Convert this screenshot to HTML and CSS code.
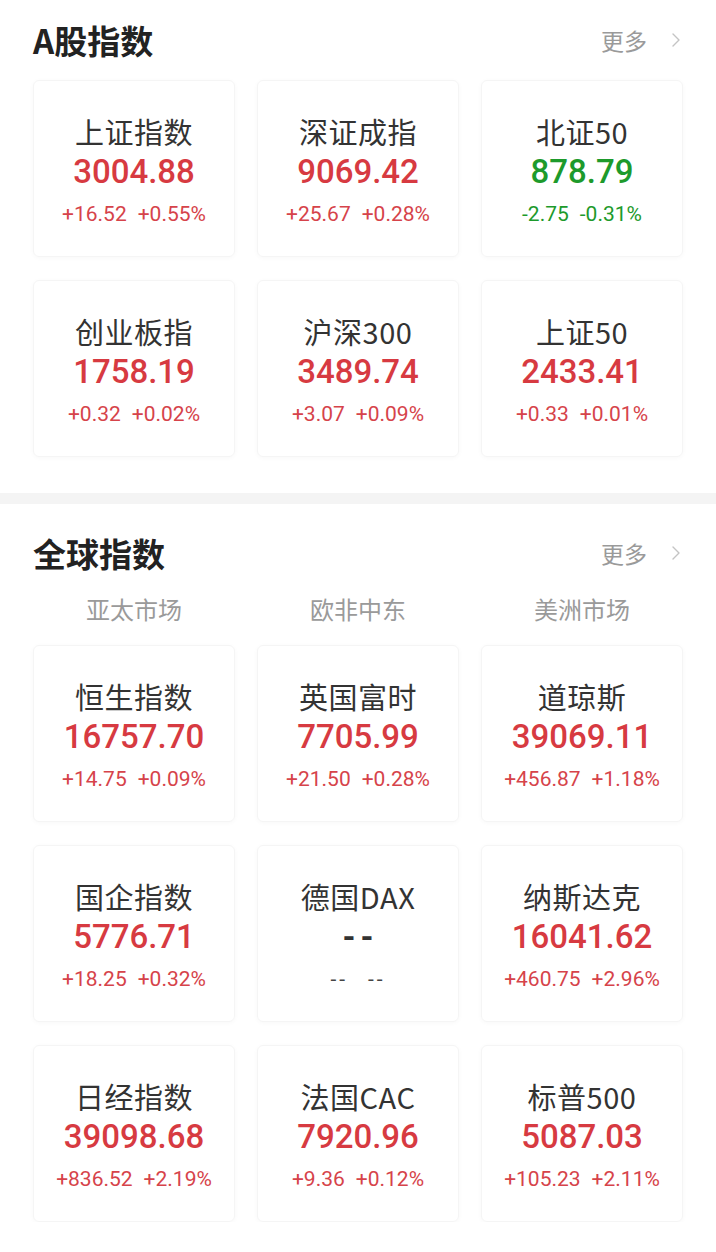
FILE: index.html
```html
<!DOCTYPE html>
<html lang="zh">
<head>
<meta charset="utf-8">
<link rel="stylesheet" href="styles.css">
</head>
<body>
<section class="panel panel-a">
  <div class="head">
    <h2 class="title">A股指数</h2>
    <div class="more">更多<svg class="chev" viewBox="0 0 10 16" width="10" height="16"><path d="M2 2 L8 8 L2 14" fill="none" stroke="#c4c4c4" stroke-width="1.4" stroke-linecap="round" stroke-linejoin="round"/></svg></div>
  </div>
  <div class="grid">
    <div class="card"><div class="name">上证指数</div><div class="val up">3004.88</div><div class="chg up"><span>+16.52</span><span>+0.55%</span></div></div>
    <div class="card"><div class="name">深证成指</div><div class="val up">9069.42</div><div class="chg up"><span>+25.67</span><span>+0.28%</span></div></div>
    <div class="card"><div class="name">北证50</div><div class="val down">878.79</div><div class="chg down"><span>-2.75</span><span>-0.31%</span></div></div>
    <div class="card"><div class="name">创业板指</div><div class="val up">1758.19</div><div class="chg up"><span>+0.32</span><span>+0.02%</span></div></div>
    <div class="card"><div class="name">沪深300</div><div class="val up">3489.74</div><div class="chg up"><span>+3.07</span><span>+0.09%</span></div></div>
    <div class="card"><div class="name">上证50</div><div class="val up">2433.41</div><div class="chg up"><span>+0.33</span><span>+0.01%</span></div></div>
  </div>
</section>
<div class="band"></div>
<section class="panel panel-b">
  <div class="head">
    <h2 class="title">全球指数</h2>
    <div class="more">更多<svg class="chev" viewBox="0 0 10 16" width="10" height="16"><path d="M2 2 L8 8 L2 14" fill="none" stroke="#c4c4c4" stroke-width="1.4" stroke-linecap="round" stroke-linejoin="round"/></svg></div>
  </div>
  <div class="regions">
    <div>亚太市场</div><div>欧非中东</div><div>美洲市场</div>
  </div>
  <div class="grid">
    <div class="card"><div class="name">恒生指数</div><div class="val up">16757.70</div><div class="chg up"><span>+14.75</span><span>+0.09%</span></div></div>
    <div class="card"><div class="name">英国富时</div><div class="val up">7705.99</div><div class="chg up"><span>+21.50</span><span>+0.28%</span></div></div>
    <div class="card"><div class="name">道琼斯</div><div class="val up">39069.11</div><div class="chg up"><span>+456.87</span><span>+1.18%</span></div></div>
    <div class="card"><div class="name">国企指数</div><div class="val up">5776.71</div><div class="chg up"><span>+18.25</span><span>+0.32%</span></div></div>
    <div class="card"><div class="name">德国DAX</div><div class="val flat">--</div><div class="chg flat"><span>--</span><span>--</span></div></div>
    <div class="card"><div class="name">纳斯达克</div><div class="val up">16041.62</div><div class="chg up"><span>+460.75</span><span>+2.96%</span></div></div>
    <div class="card"><div class="name">日经指数</div><div class="val up">39098.68</div><div class="chg up"><span>+836.52</span><span>+2.19%</span></div></div>
    <div class="card"><div class="name">法国CAC</div><div class="val up">7920.96</div><div class="chg up"><span>+9.36</span><span>+0.12%</span></div></div>
    <div class="card"><div class="name">标普500</div><div class="val up">5087.03</div><div class="chg up"><span>+105.23</span><span>+2.11%</span></div></div>
  </div>
</section>
</body>
</html>
```
FILE: styles.css
```css
* { box-sizing: border-box; }
html, body { margin: 0; padding: 0; background: #fff; }
body {
  width: 716px;
  font-family: "Noto Sans CJK SC", "Noto Sans", sans-serif;
  color: #333;
}
.panel { padding: 0 33px; }
.panel-a { padding-top: 18px; padding-bottom: 36px; }
.panel-b { padding-top: 27px; }
.head {
  display: flex;
  align-items: center;
  justify-content: space-between;
  height: 44px;
  padding-right: 2px;
}
.title {
  margin: 0;
  font-size: 33px;
  font-weight: 700;
  color: #222;
  line-height: 44px;
}
.more {
  display: flex;
  align-items: center;
  font-size: 23px;
  color: #9a9a9a;
  line-height: 44px;
}
.chev { margin-left: 24px; }
.grid {
  display: grid;
  grid-template-columns: repeat(3, 1fr);
  column-gap: 22px;
  row-gap: 23px;
  margin-top: 18px;
}
.panel-b .grid { margin-top: 19px; }
.regions {
  display: grid;
  grid-template-columns: repeat(3, 1fr);
  column-gap: 22px;
  margin-top: 17px;
  font-size: 24px;
  line-height: 34px;
  color: #9a9a9a;
  text-align: center;
}
.card {
  height: 177px;
  border: 1px solid #f5f5f5;
  border-radius: 6px;
  box-shadow: 0 1px 5px rgba(0, 0, 0, 0.03);
  text-align: center;
  padding-top: 32px;
}
.name {
  font-size: 29px;
  line-height: 36px;
  letter-spacing: 0.5px;
  color: #333;
}
.val {
  font-family: Roboto, "Liberation Sans", sans-serif;
  font-weight: 500;
  font-size: 33px;
  line-height: 44px;
  margin-top: 1px;
}
.chg {
  font-family: Roboto, "Liberation Sans", sans-serif;
  font-size: 21px;
  line-height: 30px;
  margin-top: 5px;
  display: flex;
  justify-content: center;
  gap: 11px;
}
.up { color: #d73a41; }
.chg.up { color: #d6434a; }
.down { color: #1d9a2b; }
.flat { color: #333; }
.val.flat { font-weight: 700; letter-spacing: 5px; padding-left: 5px; }
.chg.flat { gap: 20px; letter-spacing: 3px; color: #444; }
.band {
  height: 11px;
  background: #f4f4f4;
}
```
